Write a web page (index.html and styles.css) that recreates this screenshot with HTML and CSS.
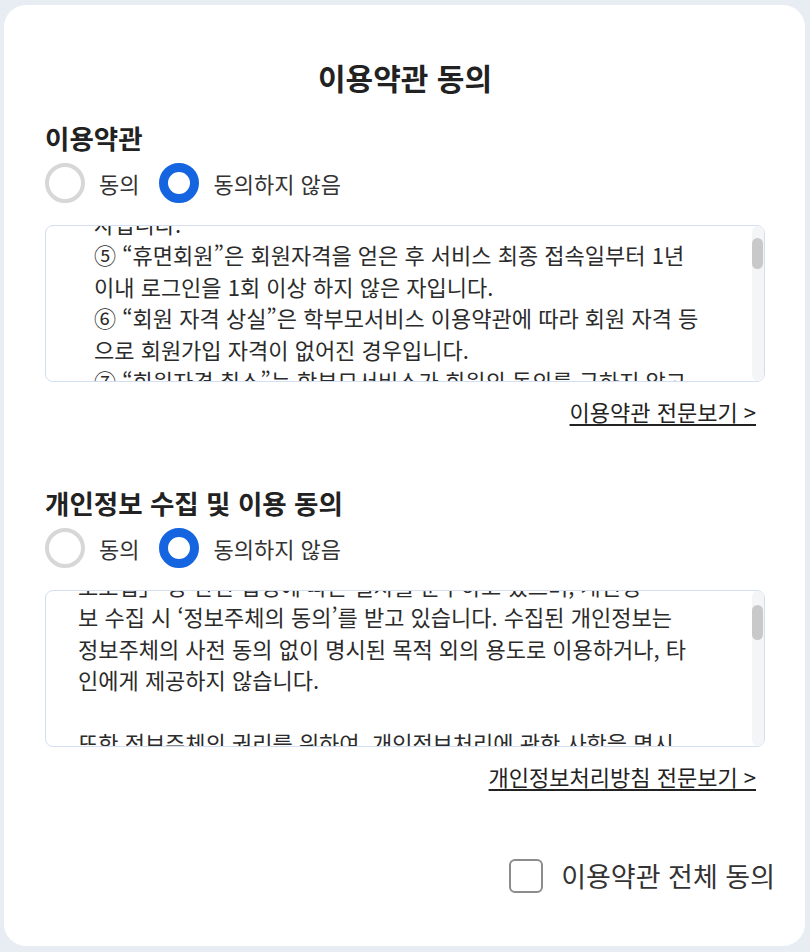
FILE: index.html
```html
<!DOCTYPE html>
<html lang="ko">
<head>
    <meta charset="UTF-8">
    <meta name="viewport" content="width=device-width, initial-scale=1.0">
    <title>이용약관 동의</title>
    <link rel="stylesheet" href="styles.css">
</head>
<body>
    <div class="card">
        <h1 class="title">이용약관 동의</h1>

        <section class="agree-section">
            <h2>이용약관</h2>
            <div class="choices">
                <label class="choice"><input type="radio" name="terms" value="yes"> 동의</label>
                <label class="choice"><input type="radio" name="terms" value="no" checked> 동의하지 않음</label>
            </div>
            <div class="doc-wrap">
                <div class="doc-box" id="termsBox">
                    <div class="terms-list">
                        <p>④ “회원”이란 학부모서비스에 접속하여 이 약관에 동의하고 가입한<br>자입니다.</p>
                        <p id="termsMark">⑤ “휴면회원”은 회원자격을 얻은 후 서비스 최종 접속일부터 1년<br>이내 로그인을 1회 이상 하지 않은 자입니다.</p>
                        <p>⑥ “회원 자격 상실”은 학부모서비스 이용약관에 따라 회원 자격 등<br>으로 회원가입 자격이 없어진 경우입니다.</p>
                        <p>⑦ “회원자격 취소”는 학부모서비스가 회원의 동의를 구하지 않고<br>회원의 자격을 박탈하는 것을 말합니다.</p>
                        <p>⑧ “게시물”이란 회원이 서비스를 이용함에 있어 서비스상에 게시한 부호·문자·음성·화상 또는 동영상 등의 정보 형태의 글, 사진, 동영상 및 각종 파일과 링크 등을 의미합니다.</p>
                        <p>⑨ “아이디(ID)”란 회원의 식별과 서비스 이용을 위하여 회원이 정하고 학부모서비스가 승인하는 문자와 숫자의 조합을 의미합니다.</p>
                        <p>⑩ “비밀번호”란 회원이 부여받은 아이디와 일치되는 회원임을 확인하고 비밀보호를 위해 회원 자신이 정한 문자 또는 숫자의 조합을 의미합니다.</p>
                        <p>제3조(약관의 게시와 개정)</p>
                        <p>① 학부모서비스는 이 약관의 내용을 회원이 쉽게 알 수 있도록 서비스 초기 화면에 게시합니다.</p>
                        <p>② 학부모서비스는 「약관의 규제에 관한 법률」, 「정보통신망 이용촉진 및 정보보호 등에 관한 법률」 등 관련 법령을 위배하지 않는 범위에서 이 약관을 개정할 수 있습니다.</p>
                        <p>③ 약관을 개정할 경우에는 적용일자 및 개정사유를 명시하여 적용일자 7일 전부터 공지합니다.</p>
                    </div>
                </div>
                <div class="scrollbar"><div class="thumb"></div></div>
            </div>
            <div class="more"><a href="#">이용약관 전문보기 &gt;</a></div>
        </section>

        <section class="agree-section">
            <h2>개인정보 수집 및 이용 동의</h2>
            <div class="choices">
                <label class="choice"><input type="radio" name="privacy" value="yes"> 동의</label>
                <label class="choice"><input type="radio" name="privacy" value="no" checked> 동의하지 않음</label>
            </div>
            <div class="doc-wrap">
                <div class="doc-box" id="privacyBox">
                    <p>학부모서비스는 정보주체의 개인정보를 소중히 여기며, 「개인정보<br>보호법」 등 관련 법령에 따른 절차를 준수하고 있으며, 개인정<br><span id="privacyMark">보</span> 수집 시 ‘정보주체의 동의’를 받고 있습니다. 수집된 개인정보는<br>정보주체의 사전 동의 없이 명시된 목적 외의 용도로 이용하거나, 타<br>인에게 제공하지 않습니다.</p>
                    <p>또한 정보주체의 권리를 위하여, 개인정보처리에 관한 사항을 명시<br>하고 있으며 개인정보처리방침을 변경하는 경우에는 서비스 공지사항을 통하여 알려 드립니다.</p>
                    <p>1. 개인정보의 처리 목적<br>학부모서비스는 회원 가입 및 관리, 서비스 제공, 민원 처리를 위하여 개인정보를 처리하며, 이용 목적이 변경되는 경우에는 별도의 동의를 받습니다.</p>
                    <p>2. 개인정보의 처리 및 보유 기간<br>회원 탈퇴 시까지 보유하며, 관계 법령에 따라 보존할 필요가 있는 경우에는 해당 기간 동안 보관합니다.</p>
                    <p>3. 처리하는 개인정보의 항목<br>필수항목: 이름, 아이디, 비밀번호, 휴대전화번호, 자녀 학교 정보</p>
                </div>
                <div class="scrollbar"><div class="thumb"></div></div>
            </div>
            <div class="more"><a href="#">개인정보처리방침 전문보기 &gt;</a></div>
        </section>

        <label class="agree-all"><input type="checkbox"> 이용약관 전체 동의</label>
    </div>

    <script src="app.js"></script>
</body>
</html>
```

FILE: styles.css
```css
body {
    margin: 0;
    padding: 5px 5px 6px 4px;
    background-color: #e8edf4;
    font-family: "Noto Sans CJK KR", "Noto Sans", sans-serif;
    color: #333;
}

.card {
    background-color: #fff;
    border-radius: 22px;
    padding: 52px 40px 53px 41px;
}

.title {
    margin: 0 0 24px;
    font-size: 30px;
    line-height: 40px;
    font-weight: 700;
    text-align: center;
    color: #222;
}

.agree-section h2 {
    margin: 0;
    font-size: 26.5px;
    line-height: 34px;
    font-weight: 700;
    color: #222;
}

.agree-section + .agree-section {
    margin-top: 61px;
}

.choices {
    display: flex;
    align-items: center;
    height: 40px;
    margin-top: 8px;
}

.choice {
    display: flex;
    align-items: center;
    gap: 14px;
    margin-right: 20px;
    font-size: 22px;
    line-height: 28px;
}

.choice input {
    appearance: none;
    -webkit-appearance: none;
    box-sizing: border-box;
    width: 40px;
    height: 40px;
    margin: 0;
    border: 4px solid #d7d7d7;
    border-radius: 50%;
    background: #fff;
}

.choice input:checked {
    border: 9px solid #1565e0;
}

.doc-wrap {
    position: relative;
    margin-top: 22px;
}

.doc-box {
    box-sizing: border-box;
    height: 157px;
    padding: 8px 30px 8px 32px;
    border: 1px solid #d3dff0;
    border-radius: 8px;
    overflow-y: scroll;
    font-size: 22px;
    line-height: 31.5px;
    color: #2b2b2b;
}

.doc-box p {
    margin: 0 0 31.5px;
}

.doc-box p:last-child {
    margin-bottom: 0;
}

.terms-list {
    padding-left: 16px;
}

.terms-list p {
    margin: 0;
}

/* drawn over the box, the browser hides its own scrollbar */
.scrollbar {
    position: absolute;
    top: 1px;
    right: 1px;
    bottom: 1px;
    width: 12px;
    background: #f4f5f6;
    border-radius: 6px;
}

.thumb {
    position: absolute;
    left: 0;
    top: 0;
    width: 11px;
    height: 30px;
    background: #c9c9c9;
    border-radius: 6px;
}

.more {
    margin-top: 15px;
    padding-right: 9px;
    text-align: right;
    font-size: 22px;
    line-height: 28px;
}

.more a {
    color: #222;
    text-decoration: underline;
    text-decoration-thickness: 1.5px;
    text-underline-offset: 3px;
}

.agree-all {
    display: flex;
    justify-content: flex-end;
    align-items: center;
    gap: 18px;
    margin: 69px -10px 0 0;
    font-size: 27px;
    line-height: 34px;
    color: #333;
}

.agree-all input {
    appearance: none;
    -webkit-appearance: none;
    box-sizing: border-box;
    width: 34px;
    height: 34px;
    margin: 0;
    border: 2px solid #8c8c8c;
    border-radius: 6px;
    background: #fff;
}
```

FILE: app.js
```js
// keep the drawn thumb in step with the box it sits over
function syncThumb(box) {
    var thumb = box.parentNode.querySelector('.thumb');
    var track = box.clientHeight;
    var size = track * box.clientHeight / box.scrollHeight;
    var room = box.scrollHeight - box.clientHeight;
    var top = room > 0 ? box.scrollTop * (track - size) / room : 0;
    thumb.style.height = size + 'px';
    thumb.style.top = top + 'px';
}

// start each document box scrolled to the same place as the design
function scrollToMark(boxId, markId, top) {
    var box = document.getElementById(boxId);
    var mark = document.getElementById(markId);
    box.scrollTop = mark.offsetTop - top;
    syncThumb(box);
    box.addEventListener('scroll', function () {
        syncThumb(box);
    });
}

scrollToMark('termsBox', 'termsMark', 14);
scrollToMark('privacyBox', 'privacyMark', 10);
```
